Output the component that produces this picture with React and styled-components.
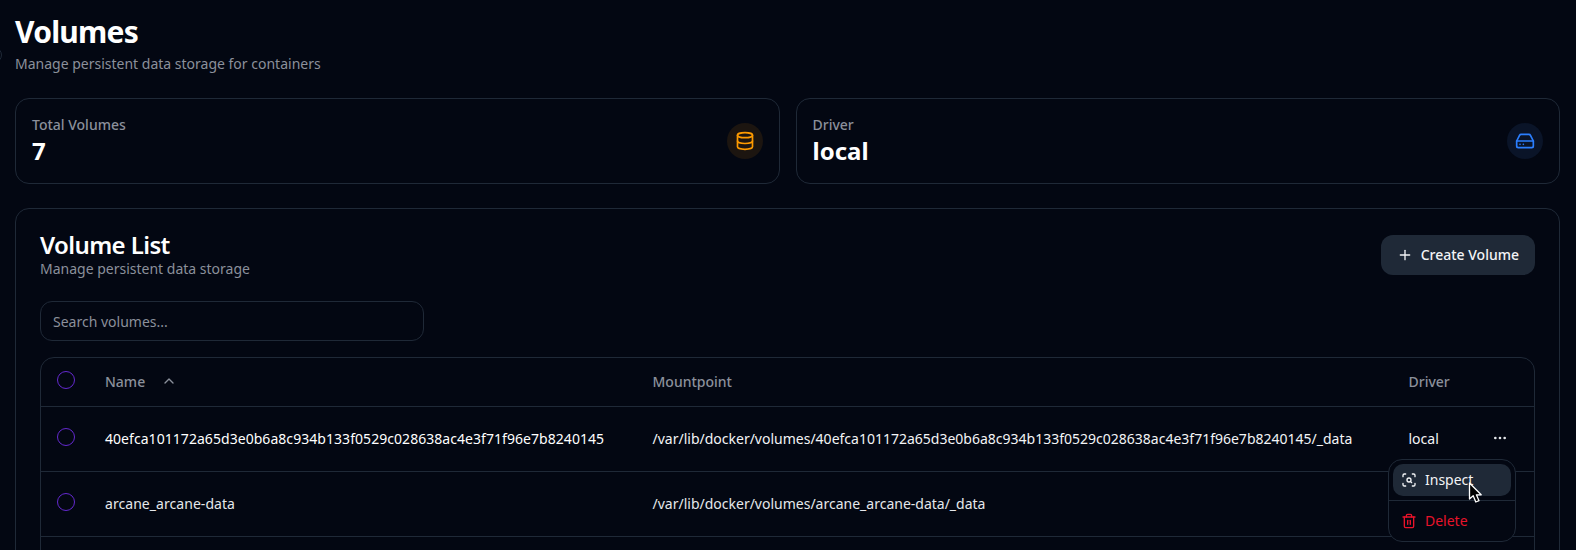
import styled, { createGlobalStyle } from "styled-components";
import { ChevronUp, Database, Ellipsis, HardDrive, Plus, ScanSearch, Trash2 } from "lucide-react";

const GlobalStyle = createGlobalStyle`
  html, body {
    margin: 0;
    height: 550px;
    overflow: hidden;
    background: #030712;
  }
  * { box-sizing: border-box; }
`;

const Page = styled.div`
  position: relative;
  width: 1576px;
  height: 550px;
  overflow: hidden;
  padding: 12px 16px 0 15px;
  background: #030712;
  color: #f9fafb;
  font-family: "Noto Sans", sans-serif;
`;

const SidebarHandle = styled.div`
  position: absolute;
  left: -14px;
  top: 47px;
  width: 16px;
  height: 16px;
  border: 1px solid #1f2937;
  border-radius: 50%;
`;

const Title = styled.h1`
  margin: 0;
  font-size: 30px;
  line-height: 40px;
  font-weight: 700;
  letter-spacing: -0.025em;
  color: #fff;
`;

const Subtitle = styled.p`
  margin: 2px 0 0;
  font-size: 14px;
  line-height: 20px;
  color: #8b909b;
`;

const Stats = styled.div`
  display: grid;
  grid-template-columns: 1fr 1fr;
  gap: 16px;
  margin-top: 24px;
`;

const StatCard = styled.div`
  display: flex;
  align-items: center;
  justify-content: space-between;
  height: 86px;
  padding: 0 16px;
  border: 1px solid #1f2937;
  border-radius: 14px;
`;

const StatLabel = styled.div`
  font-size: 14px;
  line-height: 20px;
  font-weight: 500;
  color: #8b909b;
`;

const StatValue = styled.div`
  font-size: 24px;
  line-height: 32px;
  font-weight: 700;
  color: #fff;
`;

const StatIcon = styled.div`
  display: flex;
  align-items: center;
  justify-content: center;
  width: 36px;
  height: 36px;
  border-radius: 50%;
  color: ${(props) => props.$color};
  background: ${(props) => props.$bg};
`;

const ListCard = styled.section`
  margin-top: 24px;
  height: 500px;
  padding: 24px;
  border: 1px solid #1f2937;
  border-radius: 14px;
`;

const ListHeader = styled.div`
  display: flex;
  align-items: flex-start;
  justify-content: space-between;
`;

const ListTitle = styled.h2`
  margin: 0;
  font-size: 24px;
  line-height: 24px;
  font-weight: 600;
  letter-spacing: -0.025em;
  color: #fff;
`;

const ListSubtitle = styled.p`
  margin: 2px 0 0;
  font-size: 14px;
  line-height: 20px;
  color: #8b909b;
`;

const CreateButton = styled.button`
  display: flex;
  align-items: center;
  gap: 8px;
  height: 40px;
  margin-top: 2px;
  padding: 0 16px 2px;
  border: 0;
  border-radius: 12px;
  background: #1f2937;
  color: #f3f4f6;
  font-family: inherit;
  font-size: 14px;
  font-weight: 500;

  svg {
    margin-top: 2px;
  }
`;

const SearchInput = styled.input`
  display: block;
  width: 384px;
  height: 40px;
  margin-top: 22px;
  padding: 0 12px;
  border: 1px solid #1f2937;
  border-radius: 12px;
  background: transparent;
  color: #f9fafb;
  font-family: inherit;
  font-size: 14px;

  &::placeholder {
    color: #8b909b;
    opacity: 1;
  }
`;

const TableBox = styled.div`
  margin-top: 16px;
  border: 1px solid #1f2937;
  border-radius: 14px;
`;

const Row = styled.div`
  display: grid;
  grid-template-columns: 48px 547.5px 756px 1fr;
  align-items: center;
  height: ${(props) => (props.$head ? "48px" : "65px")};
  padding-bottom: 2px;
  border-top: ${(props) => (props.$head ? "0" : "1px solid #1f2937")};
  font-size: 14px;
`;

const CheckCell = styled.div`
  display: flex;
  justify-content: flex-end;
  margin-top: -3px;
`;

const Check = styled.span`
  display: block;
  width: 18px;
  height: 18px;
  margin-right: 14px;
  border: 1.5px solid #6429cf;
  border-radius: 50%;
`;

const HeadCell = styled.div`
  display: flex;
  align-items: center;
  gap: 16px;
  padding-left: 16px;
  font-weight: 500;
  color: #8b909b;
`;

const NameCell = styled.div`
  padding-left: 16px;
  letter-spacing: 0.05px;
  color: ${(props) => (props.$hovered ? "#fff" : "#e5e7eb")};
  white-space: nowrap;
`;

const Cell = styled.div`
  padding-left: 16px;
  color: ${(props) => (props.$hovered ? "#f3f4f6" : "#e5e7eb")};
  white-space: nowrap;
`;

const DriverCell = styled(Cell)`
  display: flex;
  align-items: center;
  justify-content: space-between;
  padding-right: 26px;
`;

const ActionIcon = styled(Ellipsis)`
  color: #e5e7eb;
`;

const Menu = styled.div`
  position: absolute;
  left: 1388px;
  top: 459px;
  width: 128px;
  height: 83px;
  padding: 4px;
  border: 1px solid #1f2937;
  border-radius: 14px;
  background: #030712;
  font-size: 14px;
`;

const MenuItem = styled.div`
  display: flex;
  align-items: center;
  gap: 8px;
  height: 32px;
  padding: 0 8px 2px;
  border-radius: 10px;
  background: ${(props) => (props.$active ? "#1f2937" : "transparent")};
  color: ${(props) => (props.$danger ? "#e8132a" : "#f3f4f6")};

  svg {
    margin-top: 2px;
  }
`;

const MenuDivider = styled.div`
  height: 1px;
  margin: 4px -4px;
  background: #1f2937;
`;

const Cursor = styled.svg`
  position: absolute;
  left: 1468px;
  top: 482px;
`;

const rows = [
  {
    name: "40efca101172a65d3e0b6a8c934b133f0529c028638ac4e3f71f96e7b8240145",
    mount: "/var/lib/docker/volumes/40efca101172a65d3e0b6a8c934b133f0529c028638ac4e3f71f96e7b8240145/_data",
    hovered: true,
  },
  {
    name: "arcane_arcane-data",
    mount: "/var/lib/docker/volumes/arcane_arcane-data/_data",
    hovered: false,
  },
];

export default function App() {
  return (
    <Page>
      <GlobalStyle />
      <SidebarHandle />
      <Title>Volumes</Title>
      <Subtitle>Manage persistent data storage for containers</Subtitle>

      <Stats>
        <StatCard>
          <div>
            <StatLabel>Total Volumes</StatLabel>
            <StatValue>7</StatValue>
          </div>
          <StatIcon $color="#fd9a00" $bg="#1c1510">
            <Database size={20} />
          </StatIcon>
        </StatCard>
        <StatCard>
          <div>
            <StatLabel>Driver</StatLabel>
            <StatValue>local</StatValue>
          </div>
          <StatIcon $color="#2b7fff" $bg="#0a1428">
            <HardDrive size={20} />
          </StatIcon>
        </StatCard>
      </Stats>

      <ListCard>
        <ListHeader>
          <div>
            <ListTitle>Volume List</ListTitle>
            <ListSubtitle>Manage persistent data storage</ListSubtitle>
          </div>
          <CreateButton>
            <Plus size={16} />
            Create Volume
          </CreateButton>
        </ListHeader>

        <SearchInput placeholder="Search volumes..." />

        <TableBox>
          <Row $head>
            <CheckCell>
              <Check />
            </CheckCell>
            <HeadCell>
              Name
              <ChevronUp size={16} />
            </HeadCell>
            <HeadCell>Mountpoint</HeadCell>
            <HeadCell>Driver</HeadCell>
          </Row>
          {rows.map((row) => (
            <Row key={row.name}>
              <CheckCell>
                <Check />
              </CheckCell>
              <NameCell $hovered={row.hovered}>{row.name}</NameCell>
              <Cell $hovered={row.hovered}>{row.mount}</Cell>
              <DriverCell $hovered={row.hovered}>
                local
                <ActionIcon size={16} />
              </DriverCell>
            </Row>
          ))}
          <Row />
        </TableBox>
      </ListCard>

      <Menu>
        <MenuItem $active>
          <ScanSearch size={16} />
          Inspect
        </MenuItem>
        <MenuDivider />
        <MenuItem $danger>
          <Trash2 size={16} />
          Delete
        </MenuItem>
      </Menu>

      <Cursor width="16" height="23" viewBox="0 0 16 23">
        <path d="M1.5 1 V17 L5.2 13.8 L7.8 20 L11 18.7 L8.4 12.8 H13.2 Z" fill="#000" stroke="#fff" strokeWidth="1.3" strokeLinejoin="round" />
      </Cursor>
    </Page>
  );
}
